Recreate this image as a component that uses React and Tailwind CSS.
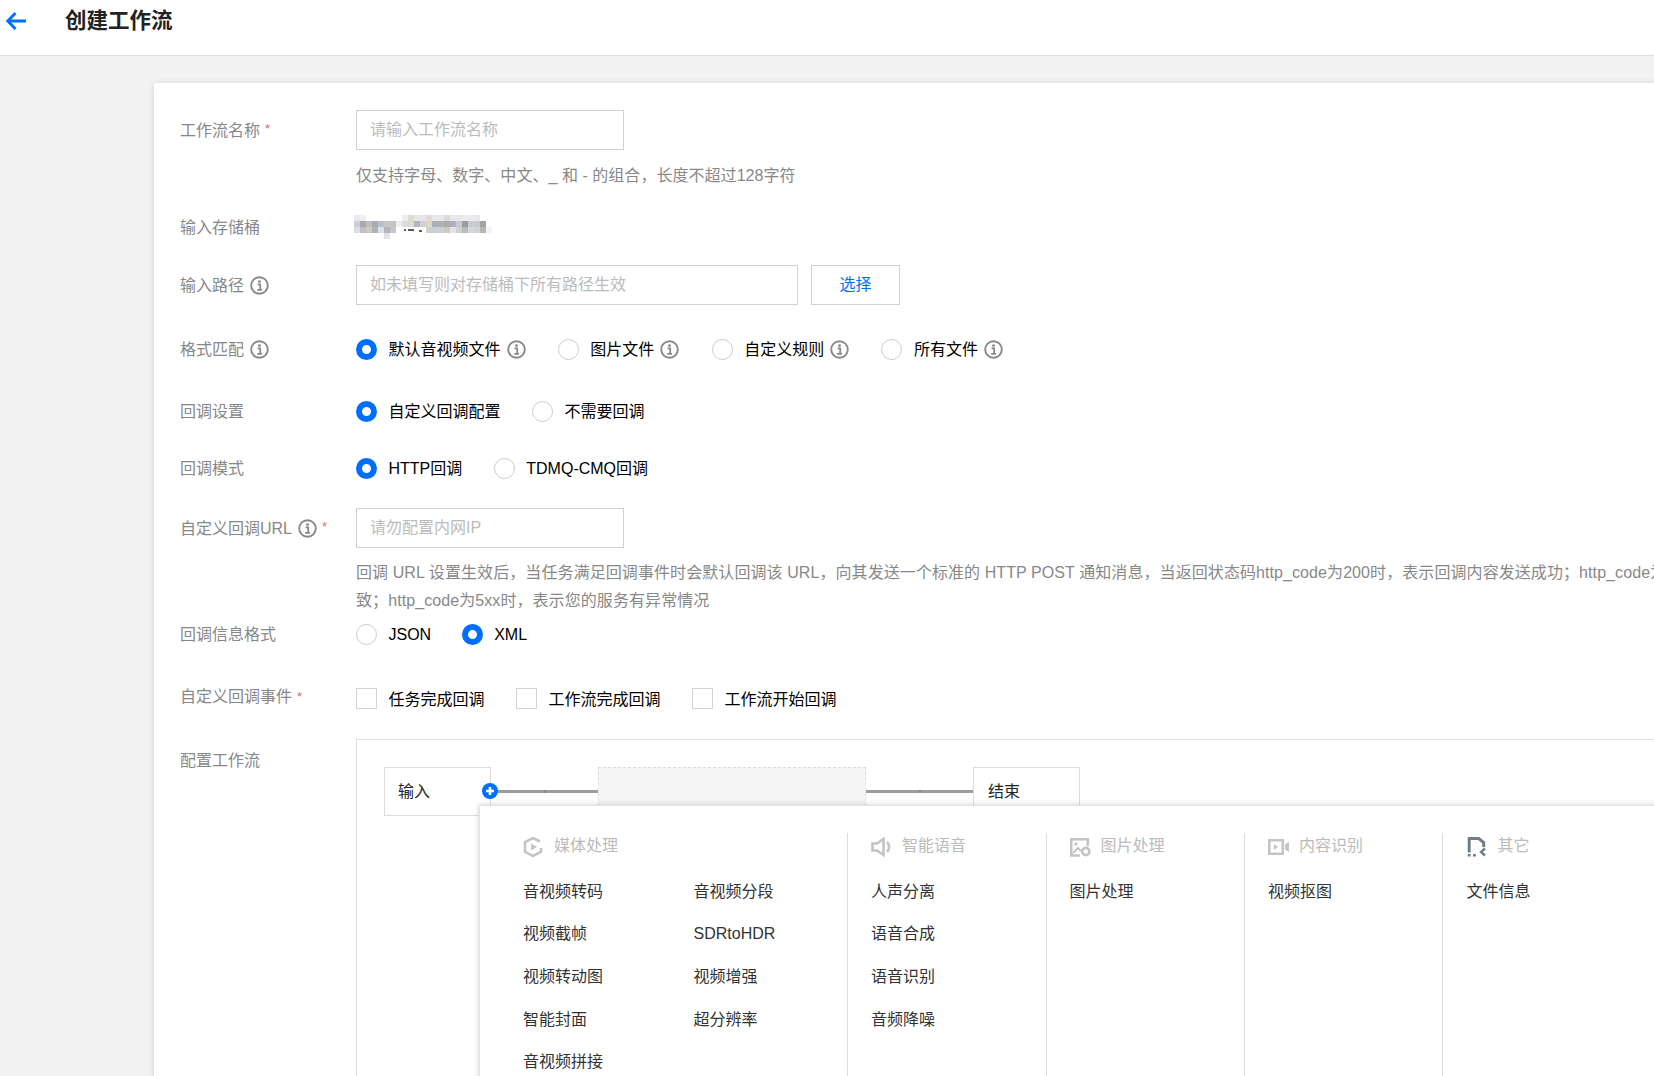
import React from "react";

const Info = () => (
  <svg width="19" height="19" viewBox="0 0 19 19" fill="none" className="shrink-0">
    <circle cx="9.5" cy="9.5" r="8.3" stroke="#888" strokeWidth="1.9" />
    <circle cx="9.5" cy="5.6" r="1.4" fill="#888" />
    <path d="M7.6 8.4h2.6v5.2M7.2 13.8h4.8" stroke="#888" strokeWidth="1.8" />
  </svg>
);

const Radio = ({ checked, label, info }) => (
  <label className="flex items-center">
    <span
      className={
        checked
          ? "w-[21px] h-[21px] rounded-full border-[6px] border-[#006eff] bg-white shrink-0"
          : "w-[21px] h-[21px] rounded-full border border-[#ccc] bg-white shrink-0"
      }
    />
    <span className="ml-[11.5px] pt-[2px] text-black whitespace-nowrap">{label}</span>
    {info && (
      <span className="ml-[6px]">
        <Info />
      </span>
    )}
  </label>
);

const Check = ({ label }) => (
  <label className="flex items-center">
    <span className="w-[21px] h-[21px] border border-[#cfd5de] bg-white shrink-0" />
    <span className="ml-[11.5px] pt-[3px] text-black whitespace-nowrap">{label}</span>
  </label>
);

const Star = () => <span className="text-[#e56a6a] text-[13px] -ml-px -mt-1">*</span>;

const Label = ({ children }) => (
  <div className="w-[176px] shrink-0 flex items-center gap-[6px] pt-[1px] text-[#888] whitespace-nowrap">{children}</div>
);

const Row = ({ className, children }) => <div className={`flex items-center ${className}`}>{children}</div>;

const mosaic = [
  { y: 216, cells: [[354, "#ebebef"], [360, "#f0eeee"], [402, "#eeeeee"], [408, "#ddd9d5"], [414, "#e6e6e6"], [420, "#e6e6ea"], [426, "#e0dcd5"], [432, "#e6e8ec"], [438, "#e8e8ec"], [444, "#e0dad6"], [450, "#e6e8ec"], [456, "#e8e8ec"], [462, "#ecebeb"], [468, "#ecebeb"], [474, "#e8e8ea"]] },
  { y: 222, cells: [[354, "#cfcfdc"], [360, "#a9a7a9"], [366, "#c0bcb8"], [372, "#a9abb3"], [378, "#bcc0c8"], [384, "#c9c6c6"], [390, "#c0c4cc"], [396, "#f2eeee"], [402, "#dcdce0"], [408, "#dedbcf"], [414, "#b4b4c0"], [420, "#d0d0d4"], [426, "#dcd8c8"], [432, "#a6b0b8"], [438, "#b4b0b0"], [444, "#b0aca8"], [450, "#b0aec0"], [456, "#c6cace"], [462, "#9a9e9a"], [468, "#c8ccd0"], [474, "#c8ccd0"], [480, "#a2a49e"]] },
  { y: 228, cells: [[354, "#dcdcec"], [360, "#c0bebe"], [366, "#ccc8c4"], [372, "#aeb4b4"], [378, "#dde0e8"], [384, "#b4b4c0"], [390, "#c4c8cc"], [426, "#d0d0c8"], [432, "#c8d0d4"], [438, "#ccd0d0"], [444, "#ccc8c4"], [450, "#e4e4e8"], [456, "#ccd0d0"], [462, "#b8bcb8"], [468, "#d4d8dc"], [474, "#d0d4d4"], [480, "#b4b8b0"], [486, "#f2f6fa"]] },
  { y: 234, cells: [[384, "#e4e2e2"]] },
];

const Mosaic = () => (
  <svg width="138" height="24" viewBox="354 216 138 24" className="-ml-[2px]">
    {mosaic.map((row) =>
      row.cells.map(([x, c]) => <rect key={`${x}-${row.y}`} x={x} y={row.y} width="6" height="6" fill={c} />)
    )}
    <path d="M404 231h2M408 231h6M419 232h3" stroke="#222" strokeWidth="1.5" />
  </svg>
);

const MediaIcon = () => (
  <svg width="20" height="20" viewBox="0 0 20 20" fill="none">
    <path d="M17 4.5 10 1 2 5.2v9.6L10 19l8-4.2V11" stroke="#c4c4c4" strokeWidth="2.6" />
    <path d="M8 6.6 14 10l-6 3.4z" fill="#c4c4c4" />
  </svg>
);

const VoiceIcon = () => (
  <svg width="23" height="20" viewBox="0 0 23 20" fill="none">
    <path d="M1.5 6.5h4.5L12.5 2v16L6 13.5H1.5z" stroke="#c4c4c4" strokeWidth="2.6" />
    <path d="M16 5c2.8 2.6 2.8 7.4 0 10" stroke="#c4c4c4" strokeWidth="2.6" />
  </svg>
);

const ImageIcon = () => (
  <svg width="22" height="19" viewBox="0 0 22 19" fill="none">
    <path d="M10 17.5H1.2V1.2h16.6V8" stroke="#c4c4c4" strokeWidth="2.6" />
    <circle cx="6" cy="6" r="1.7" fill="#c4c4c4" />
    <path d="M3 15l5-5 3 3" stroke="#c4c4c4" strokeWidth="2" />
    <circle cx="15.8" cy="13.5" r="3.6" stroke="#c4c4c4" strokeWidth="2.6" />
  </svg>
);

const ContentIcon = () => (
  <svg width="22" height="16" viewBox="0 0 22 16" fill="none">
    <rect x="1.2" y="1.2" width="13.6" height="13.6" stroke="#c4c4c4" strokeWidth="2.6" />
    <path d="M6 5l4 3-4 3z" fill="#c4c4c4" />
    <path d="M17 5.5 21 3v10l-4-2.5z" fill="#c4c4c4" />
  </svg>
);

const OtherIcon = () => (
  <svg width="20" height="20" viewBox="0 0 20 20" fill="none">
    <path d="M2.2 15.5V1.5h9.5l5 4V10" stroke="#727e87" strokeWidth="3" />
    <path d="M.8 17h2.8v2.6H.8zM6 17h2.8v2.6H6z" fill="#727e87" />
    <path d="M18 11.5l-4 3.5 4 3.5" stroke="#727e87" strokeWidth="2.4" />
  </svg>
);

const Section = ({ icon, title }) => (
  <div className="h-[28px] mb-[9.5px] flex items-center">
    <span className="w-[31px] shrink-0 flex items-center">{icon}</span>
    <span className="text-[#bbb] -mt-[3px] whitespace-nowrap">{title}</span>
  </div>
);

const Item = ({ children }) => <div className="h-[42.6px] flex items-center text-[#333] whitespace-nowrap">{children}</div>;

const Column = ({ className, icon, title, items }) => (
  <div className={className}>
    <Section icon={icon} title={title} />
    {items.map((t) => (
      <Item key={t}>{t}</Item>
    ))}
  </div>
);

const Connector = () => (
  <div className="w-[107px] shrink-0 h-[3px] bg-[#9c9c9c] flex justify-center">
    <span className="w-[2px] h-[3px] bg-[#888]" />
  </div>
);

const mediaItems = [
  "音视频转码",
  "音视频分段",
  "视频截帧",
  "SDRtoHDR",
  "视频转动图",
  "视频增强",
  "智能封面",
  "超分辨率",
  "音视频拼接",
];

export default function App() {
  return (
    <div className="h-screen w-full overflow-hidden bg-[#f2f2f2] text-base font-['Liberation_Sans','Noto_Sans_CJK_SC',sans-serif]">
      <header className="h-[56px] bg-white border-b border-[#ddd] flex items-start">
        <div className="h-[41px] flex items-center pl-[6px]">
          <svg width="20" height="20" viewBox="0 0 20 20" fill="none">
            <path d="M9.5 2 1.8 10l7.7 8M2 10h18" stroke="#006eff" strokeWidth="2.8" />
          </svg>
          <h1 className="ml-[39px] pt-[3px] text-[21.5px] leading-none font-bold text-[#222] whitespace-nowrap">创建工作流</h1>
        </div>
      </header>

      <main className="pt-[27px] pl-[154px]">
        <div className="bg-white h-[1000px] w-[1600px] pt-[27px] pl-[26px] shadow-[0_0_6px_rgba(0,0,0,0.12)]">
          <Row className="h-[40px]">
            <Label>
              <span>工作流名称</span>
              <Star />
            </Label>
            <input
              placeholder="请输入工作流名称"
              className="w-[268px] h-[40px] px-[13px] border border-[#ccd2dc] text-base outline-none placeholder:text-[#bbb]"
            />
          </Row>
          <Row className="h-[52px] pl-[176px]">
            <span className="text-[#888] tracking-[0.04px] whitespace-nowrap">仅支持字母、数字、中文、_ 和 - 的组合，长度不超过128字符</span>
          </Row>
          <Row className="h-[50px]">
            <Label>输入存储桶</Label>
            <Mosaic />
          </Row>
          <Row className="h-[40px] mt-[13px]">
            <Label>
              <span>输入路径</span>
              <Info />
            </Label>
            <input
              placeholder="如未填写则对存储桶下所有路径生效"
              className="w-[442px] h-[40px] px-[13px] border border-[#ccd2dc] text-base outline-none placeholder:text-[#bbb]"
            />
            <button className="ml-[13px] w-[89px] h-[40px] border border-[#ccd2dc] text-[#006eff]">选择</button>
          </Row>
          <Row className="h-[88px]">
            <Label>
              <span>格式匹配</span>
              <Info />
            </Label>
            <div className="flex items-center gap-[32.3px]">
              <Radio checked label="默认音视频文件" info />
              <Radio label="图片文件" info />
              <Radio label="自定义规则" info />
              <Radio label="所有文件" info />
            </div>
          </Row>
          <Row className="h-[36px]">
            <Label>回调设置</Label>
            <div className="flex items-center gap-[31.5px]">
              <Radio checked label="自定义回调配置" />
              <Radio label="不需要回调" />
            </div>
          </Row>
          <Row className="h-[78px]">
            <Label>回调模式</Label>
            <div className="flex items-center gap-[31.5px]">
              <Radio checked label="HTTP回调" />
              <Radio label="TDMQ-CMQ回调" />
            </div>
          </Row>
          <Row className="h-[40px] mt-px">
            <Label>
              <span>自定义回调URL</span>
              <Info />
              <Star />
            </Label>
            <input
              placeholder="请勿配置内网IP"
              className="w-[268px] h-[40px] px-[13px] border border-[#ccd2dc] text-base outline-none placeholder:text-[#bbb]"
            />
          </Row>
          <div className="pl-[176px] mt-[11px] text-[#888] leading-[28px] tracking-[0.08px] whitespace-nowrap">
            <p>
              回调 URL 设置生效后，当任务满足回调事件时会默认回调该 URL，向其发送一个标准的 HTTP POST
              通知消息，当返回状态码http_code为200时，表示回调内容发送成功；http_code为
            </p>
            <p>致；http_code为5xx时，表示您的服务有异常情况</p>
          </div>
          <Row className="h-[38px]">
            <Label>回调信息格式</Label>
            <div className="flex items-center gap-[30.5px]">
              <Radio label="JSON" />
              <Radio checked label="XML" />
            </div>
          </Row>
          <Row className="h-[86px] pt-[4px]">
            <Label>
              <span className="-mt-[3px]">自定义回调事件</span>
              <Star />
            </Label>
            <div className="flex items-center gap-[31.5px]">
              <Check label="任务完成回调" />
              <Check label="工作流完成回调" />
              <Check label="工作流开始回调" />
            </div>
          </Row>
          <div className="flex">
            <div className="pt-[9px]">
              <Label>配置工作流</Label>
            </div>
            <div className="relative flex-1 h-[400px] border border-[#ddd] pt-[27px] pl-[27px]">
              <div className="flex items-center">
                <div className="relative w-[107px] h-[49px] shrink-0 border border-[#ddd] flex items-center pl-[13px] text-[#222]">
                  输入
                  <span className="absolute -right-[8px] top-[15px] w-4 h-4 rounded-full bg-[#006eff] flex items-center justify-center">
                    <svg width="10" height="10" viewBox="0 0 10 10">
                      <path d="M5 1v8M1 5h8" stroke="#fff" strokeWidth="2.6" />
                    </svg>
                  </span>
                </div>
                <Connector />
                <div className="w-[268px] h-[49px] shrink-0 border border-dashed border-[#ddd] bg-[#f5f5f5]" />
                <Connector />
                <div className="w-[107px] h-[49px] shrink-0 border border-[#ddd] flex items-center pl-[14px] text-[#222]">结束</div>
              </div>

              <div className="absolute left-[122px] top-[65px] w-[1300px] h-[320px] bg-white border border-[#e4e4e4] shadow-[0_0_6px_rgba(0,0,0,0.18)] pt-[27px] flex items-start">
                <div className="w-[368px] h-[300px] pl-[43px] border-r border-[#ddd] shrink-0">
                  <Section icon={<MediaIcon />} title="媒体处理" />
                  <div className="grid grid-cols-[170.5px_1fr]">
                    {mediaItems.map((t) => (
                      <Item key={t}>{t}</Item>
                    ))}
                  </div>
                </div>
                <Column
                  className="w-[198.5px] h-[300px] pl-[23px] border-r border-[#ddd] shrink-0"
                  icon={<VoiceIcon />}
                  title="智能语音"
                  items={["人声分离", "语音合成", "语音识别", "音频降噪"]}
                />
                <Column
                  className="w-[198.5px] h-[300px] pl-[23px] border-r border-[#ddd] shrink-0"
                  icon={<ImageIcon />}
                  title="图片处理"
                  items={["图片处理"]}
                />
                <Column
                  className="w-[197.5px] h-[300px] pl-[23px] border-r border-[#ddd] shrink-0"
                  icon={<ContentIcon />}
                  title="内容识别"
                  items={["视频抠图"]}
                />
                <Column className="pl-[24px] shrink-0" icon={<OtherIcon />} title="其它" items={["文件信息"]} />
              </div>
            </div>
          </div>
        </div>
      </main>
    </div>
  );
}
